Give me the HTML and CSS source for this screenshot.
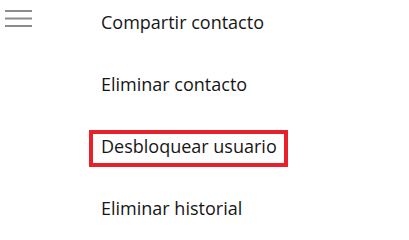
FILE: index.html
```html
<!DOCTYPE html>
<html lang="es">
<head>
<meta charset="utf-8">
<title>Menú de contacto</title>
<link rel="stylesheet" href="styles.css">
</head>
<body>
<div class="page">
  <button class="hamburger" aria-label="Menú">
    <svg width="27" height="20" viewBox="0 0 27 20" aria-hidden="true">
      <rect x="0" y="0" width="27" height="2" fill="#8c8c8c"/>
      <rect x="0" y="7.5" width="27" height="2" fill="#8c8c8c"/>
      <rect x="0" y="15" width="27" height="2" fill="#8c8c8c"/>
    </svg>
  </button>
  <ul class="menu">
    <li class="item">Compartir contacto</li>
    <li class="item">Eliminar contacto</li>
    <li class="item item-highlight">Desbloquear usuario</li>
    <li class="item">Eliminar historial</li>
  </ul>
</div>
</body>
</html>
```
FILE: styles.css
```css
html, body {
  margin: 0;
  padding: 0;
  background: #ffffff;
}

body {
  width: 409px;
  height: 224px;
  overflow: hidden;
  font-family: "Open Sans", "Noto Sans", sans-serif;
  color: #161616;
}

.page {
  display: flex;
  align-items: flex-start;
}

.hamburger {
  margin: 10px 0 0 5px;
  padding: 0;
  border: 0;
  background: none;
  width: 27px;
  height: 20px;
  display: block;
}

.hamburger svg {
  display: block;
}

.menu {
  list-style: none;
  margin: 6px 0 0 57px;
  padding: 0;
  display: flex;
  flex-direction: column;
  align-items: flex-start;
  gap: 25px;
}

.item {
  font-size: 18px;
  line-height: 25px;
  padding: 0 7px 4px 8px;
  border: 4px solid transparent;
  white-space: nowrap;
}

.item-highlight {
  border-color: #e8202a;
}
```
